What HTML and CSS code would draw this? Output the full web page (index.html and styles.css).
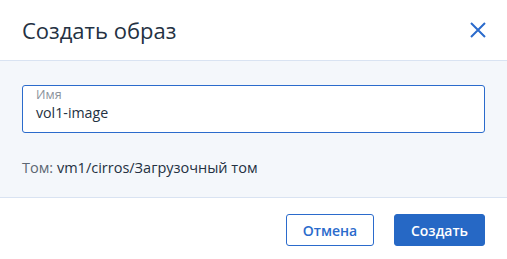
FILE: index.html
```html
<!DOCTYPE html>
<html lang="ru">
<head>
<meta charset="utf-8">
<link rel="stylesheet" href="styles.css">
</head>
<body>
<div class="dialog">
  <header class="head">
    <h1 class="title">Создать образ</h1>
    <button class="close" aria-label="Закрыть">
      <svg width="16" height="16" viewBox="0 0 16 16"><path d="M1 1L15 15M15 1L1 15" stroke="#2b6bcc" stroke-width="2" fill="none"/></svg>
    </button>
  </header>
  <main class="body">
    <div class="field">
      <div class="label">Имя</div>
      <div class="value">vol1-image</div>
    </div>
    <p class="info"><span class="muted">Том:</span> <span class="strong">vm1/cirros/Загрузочный том</span></p>
  </main>
  <footer class="foot">
    <button class="btn btn-outline">Отмена</button>
    <button class="btn btn-primary">Создать</button>
  </footer>
</div>
</body>
</html>
```
FILE: styles.css
```css
* { box-sizing: border-box; }
html, body { margin: 0; padding: 0; background: #fff; }
body { font-family: "Open Sans", "Noto Sans", sans-serif; color: #243142; }
.dialog { width: 507px; height: 259px; display: flex; flex-direction: column; }
.head {
  height: 61px;
  display: flex; align-items: center; justify-content: space-between;
  padding: 0 21px 0 22px;
  border-bottom: 1px solid #d9e3f2;
}
.title { margin: 0; font-size: 22px; font-weight: 400; color: #243142; line-height: 1; padding-bottom: 1px; }
.close { border: 0; background: none; padding: 0; width: 16px; height: 16px; display: flex; cursor: pointer; }
.body {
  height: 137px;
  background: #f4f7fb;
  border-bottom: 1px solid #d9e3f2;
  padding: 24px 22px 0 22px;
}
.field {
  height: 48px;
  background: #fff;
  border: 1px solid #2b6bcc;
  border-radius: 3px;
  padding: 1px 13px 0 13px;
}
.label { font-size: 12.5px; color: #8a929c; line-height: 15px; }
.value { font-size: 14.2px; color: #243142; line-height: 20px; margin-top: 1px; }
.info { margin: 26px 0 0 0; font-size: 14.5px; color: #243142; line-height: 18px; }
.muted { color: #5d6773; }
.strong { font-weight: 500; }
.foot {
  flex: 1;
  display: flex; justify-content: flex-end; align-items: flex-start;
  gap: 20px;
  padding: 16px 22px 0 0;
}
.btn {
  height: 32px; border-radius: 3px; font-family: inherit; font-size: 14px; font-weight: 600;
  padding: 0; cursor: pointer;
}
.btn-outline { width: 88px; background: #fff; color: #2b6bcc; border: 1px solid #2b6bcc; }
.btn-primary { width: 91px; background: #2668c5; color: #fff; border: 1px solid #2668c5; }
```
